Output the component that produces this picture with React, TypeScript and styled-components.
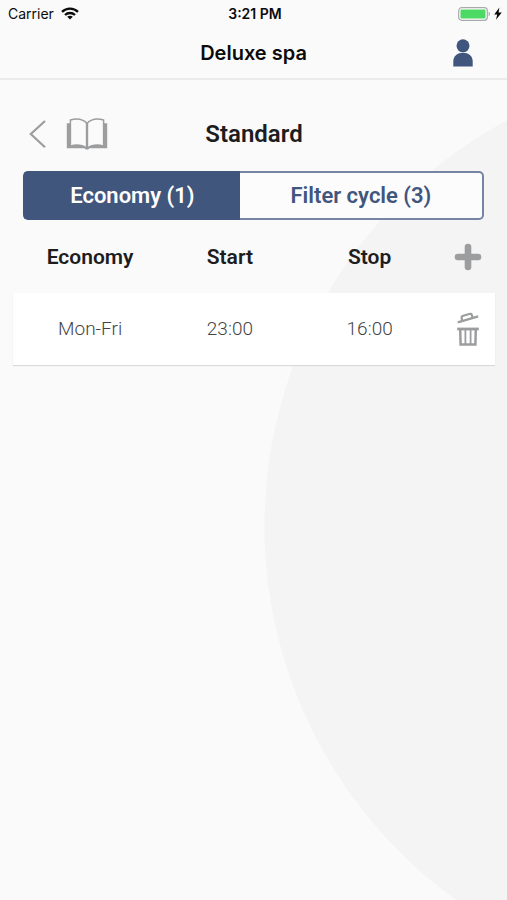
import React, { useState } from "react";
import styled, { createGlobalStyle } from "styled-components";

const navy = "#41567d";
const grey = "#9b9d9e";

const GlobalStyle = createGlobalStyle`
  *, *::before, *::after { box-sizing: border-box; }
  body { margin: 0; background: #fafafa; }
`;

const Screen = styled.div`
  min-height: 100vh;
  color: #1d1d1f;
  font-family: Roboto, "Liberation Sans", sans-serif;
  background: radial-gradient(circle at calc(100% + 218px) 526px, #f4f4f4 460px, #fafafa 461px);
`;

const TopArea = styled.header`
  border-bottom: 2px solid #ebebeb;
  background: #fafafa;
  color: #0b0b0c;
  font-family: Inter, "Liberation Sans", sans-serif;
`;

const StatusBar = styled.div`
  display: grid;
  grid-template-columns: 1fr auto 1fr;
  align-items: center;
  height: 27px;
  padding: 0 5px 0 8px;
  font-size: 14px;
  line-height: 20px;
`;

const StatusGroup = styled.div<{ $end?: boolean }>`
  display: flex;
  align-items: center;
  justify-content: ${(p) => (p.$end ? "flex-end" : "flex-start")};
  gap: ${(p) => (p.$end ? 3 : 7)}px;
`;

const Clock = styled.time`
  font-weight: 600;
`;

const NavBar = styled.div`
  display: grid;
  grid-template-columns: 1fr auto 1fr;
  align-items: center;
  height: 51px;
  padding: 0 33px;
`;

const NavTitle = styled.h1`
  grid-column: 2;
  margin: 0;
  font-size: 20px;
  line-height: 28px;
  font-weight: 600;
`;

const IconButton = styled.button<{ $tone?: string }>`
  display: inline-flex;
  align-items: center;
  justify-content: center;
  padding: 0;
  border: 0;
  background: none;
  color: ${(p) => p.$tone ?? grey};
  vertical-align: middle;
  cursor: pointer;
`;

const AccountButton = styled(IconButton)`
  justify-self: end;
`;

const Content = styled.main`
  padding: 35px 12px 0 13px;
`;

const SectionBar = styled.div`
  display: grid;
  grid-template-columns: 1fr auto 1fr;
  align-items: center;
  height: 37px;
  padding: 0 15px;
`;

const SectionActions = styled.div`
  display: flex;
  align-items: center;
  gap: 18px;
`;

const SectionTitle = styled.h2`
  margin: 0;
  font-size: 24px;
  line-height: 32px;
  font-weight: 600;
`;

const Tabs = styled.div`
  display: flex;
  height: 49px;
  margin: 19px 11px 0 10px;
`;

const Tab = styled.button<{ $grow: number }>`
  flex: ${(p) => p.$grow} 1 0;
  padding: 0;
  border: 2px solid #7585a3;
  background: #fcfcfd;
  color: ${navy};
  font: 600 22px/28px Roboto, "Liberation Sans", sans-serif;
  cursor: pointer;
  &:first-child {
    border-right: 0;
    border-radius: 5px 0 0 5px;
  }
  &:last-child {
    border-left: 0;
    border-radius: 0 5px 5px 0;
  }
  &[aria-selected="true"] {
    border-color: ${navy};
    background: ${navy};
    color: #fff;
  }
`;

const Schedule = styled.table`
  width: 100%;
  table-layout: fixed;
  border-collapse: collapse;
  text-align: center;
`;

const HeadCell = styled.th<{ $width: string }>`
  width: ${(p) => p.$width};
  height: 73px;
  padding: 0;
  font-size: 21px;
  line-height: 28px;
  font-weight: 600;
  &:last-child {
    padding-right: 5px;
  }
`;

const BodyRow = styled.tr`
  background: #fff;
  box-shadow: 0 1px 1px #d9d9d9;
`;

const Cell = styled.td`
  height: 72px;
  padding: 0;
  color: #444;
  font-size: 19px;
  line-height: 28px;
  font-weight: 300;
  &:last-child {
    padding-right: 5px;
  }
`;

const WifiIcon = () => (
  <svg width="18" height="13" viewBox="0 0 18 13" fill="none" stroke="#0b0b0c" strokeWidth="2.3" aria-hidden="true">
    <path d="M1 4.9C5.4.6 12.6.6 17 4.9" />
    <path d="M4 8C6.8 5.3 11.2 5.3 14 8" />
    <path d="M9 12.5 6.2 9.7C7.8 8.3 10.2 8.3 11.8 9.7Z" fill="#0b0b0c" stroke="none" />
  </svg>
);

const BatteryIcon = () => (
  <svg width="33" height="14" viewBox="0 0 33 14" role="img" aria-label="Battery charging">
    <rect x="0.7" y="0.7" width="28.6" height="12.6" rx="3" fill="#fff" stroke="#a9a9a9" strokeWidth="1.2" />
    <rect x="2.5" y="2.5" width="25" height="9" rx="1" fill="#4cd964" />
    <path d="M30.6 4.8c1.8.6 1.8 3.8 0 4.4Z" fill="#a9a9a9" />
  </svg>
);

const BoltIcon = () => (
  <svg width="8" height="13" viewBox="0 0 8 13" aria-hidden="true">
    <path d="M5.4.4.2 7.4h3L2 12.8 7.8 5.4H4.6Z" fill="#0b0b0c" />
  </svg>
);

const PersonIcon = () => (
  <svg width="22" height="28" viewBox="0 0 22 28" fill="currentColor" aria-hidden="true">
    <circle cx="11" cy="6.8" r="6.5" />
    <path d="M1.3 27.5V22.5C1.3 17 5.6 13.8 11 13.8S20.7 17 20.7 22.5V27.5Z" />
  </svg>
);

const BackIcon = () => (
  <svg width="20" height="30" viewBox="0 0 20 30" fill="none" stroke="currentColor" strokeWidth="2.2" aria-hidden="true">
    <path d="M17 2 2.8 15 17 28.2" />
  </svg>
);

const BookIcon = () => (
  <svg width="42" height="34" viewBox="0 0 42 34" fill="none" stroke="currentColor" aria-hidden="true">
    <path d="M4.4 27V3C10.5 1 17 2.2 21 6.2 25 2.2 31.5 1 37.6 3V27" strokeWidth="1.5" />
    <path d="M21 6V31.5" strokeWidth="2.4" />
    <path d="M.8 6.2H5V28C11 26.6 17 27.4 21 30.4 25 27.4 31 26.6 37 28V6.2H41.2V31.2H23.5C22.5 33 19.5 33 18.5 31.2H.8Z" fill="currentColor" stroke="none" />
  </svg>
);

const PlusIcon = () => (
  <svg width="28" height="28" viewBox="0 0 28 28" fill="none" stroke="currentColor" strokeWidth="6.6" strokeLinecap="round" aria-hidden="true">
    <path d="M14 4V24M4 14H24" />
  </svg>
);

const TrashIcon = () => (
  <svg width="24" height="36" viewBox="0 0 24 36" fill="none" stroke="currentColor" strokeWidth="1.8" aria-hidden="true">
    <path d="M1.8 11.4 22.2 5.4" strokeWidth="2.4" />
    <path d="M6 9.6 5.6 6Q5.6 5.2 6.4 5L14.2 2.8Q15.2 2.6 15.6 3.4L16.6 6.6" strokeWidth="2.2" />
    <path d="M1.2 18H22.8" strokeWidth="2.8" />
    <path d="M4.2 18.5 4.6 33.4H19.4L19.8 18.5" strokeWidth="2.5" />
    <path d="M9.4 19V33M14.6 19V33" />
  </svg>
);

const tabs = [
  { id: "economy", label: "Economy (1)", grow: 47 },
  { id: "filter", label: "Filter cycle (3)", grow: 53 },
];

const rows = [{ days: "Mon-Fri", start: "23:00", stop: "16:00" }];

export default function App() {
  const [active, setActive] = useState("economy");
  return (
    <Screen>
      <GlobalStyle />
      <TopArea>
        <StatusBar>
          <StatusGroup>
            <span>Carrier</span>
            <WifiIcon />
          </StatusGroup>
          <Clock>3:21 PM</Clock>
          <StatusGroup $end>
            <BatteryIcon />
            <BoltIcon />
          </StatusGroup>
        </StatusBar>
        <NavBar>
          <NavTitle>Deluxe spa</NavTitle>
          <AccountButton $tone={navy} type="button" aria-label="Account">
            <PersonIcon />
          </AccountButton>
        </NavBar>
      </TopArea>
      <Content>
        <SectionBar>
          <SectionActions>
            <IconButton type="button" aria-label="Back">
              <BackIcon />
            </IconButton>
            <IconButton type="button" aria-label="Guide">
              <BookIcon />
            </IconButton>
          </SectionActions>
          <SectionTitle>Standard</SectionTitle>
        </SectionBar>
        <Tabs role="tablist">
          {tabs.map((tab) => (
            <Tab
              key={tab.id}
              type="button"
              role="tab"
              aria-selected={active === tab.id}
              $grow={tab.grow}
              onClick={() => setActive(tab.id)}
            >
              {tab.label}
            </Tab>
          ))}
        </Tabs>
        <Schedule>
          <thead>
            <tr>
              <HeadCell scope="col" $width="32%">Economy</HeadCell>
              <HeadCell scope="col" $width="26%">Start</HeadCell>
              <HeadCell scope="col" $width="32%">Stop</HeadCell>
              <HeadCell scope="col" $width="10%">
                <IconButton type="button" aria-label="Add period">
                  <PlusIcon />
                </IconButton>
              </HeadCell>
            </tr>
          </thead>
          <tbody>
            {rows.map((row) => (
              <BodyRow key={row.days}>
                <Cell>{row.days}</Cell>
                <Cell>{row.start}</Cell>
                <Cell>{row.stop}</Cell>
                <Cell>
                  <IconButton type="button" aria-label="Delete period">
                    <TrashIcon />
                  </IconButton>
                </Cell>
              </BodyRow>
            ))}
          </tbody>
        </Schedule>
      </Content>
    </Screen>
  );
}
